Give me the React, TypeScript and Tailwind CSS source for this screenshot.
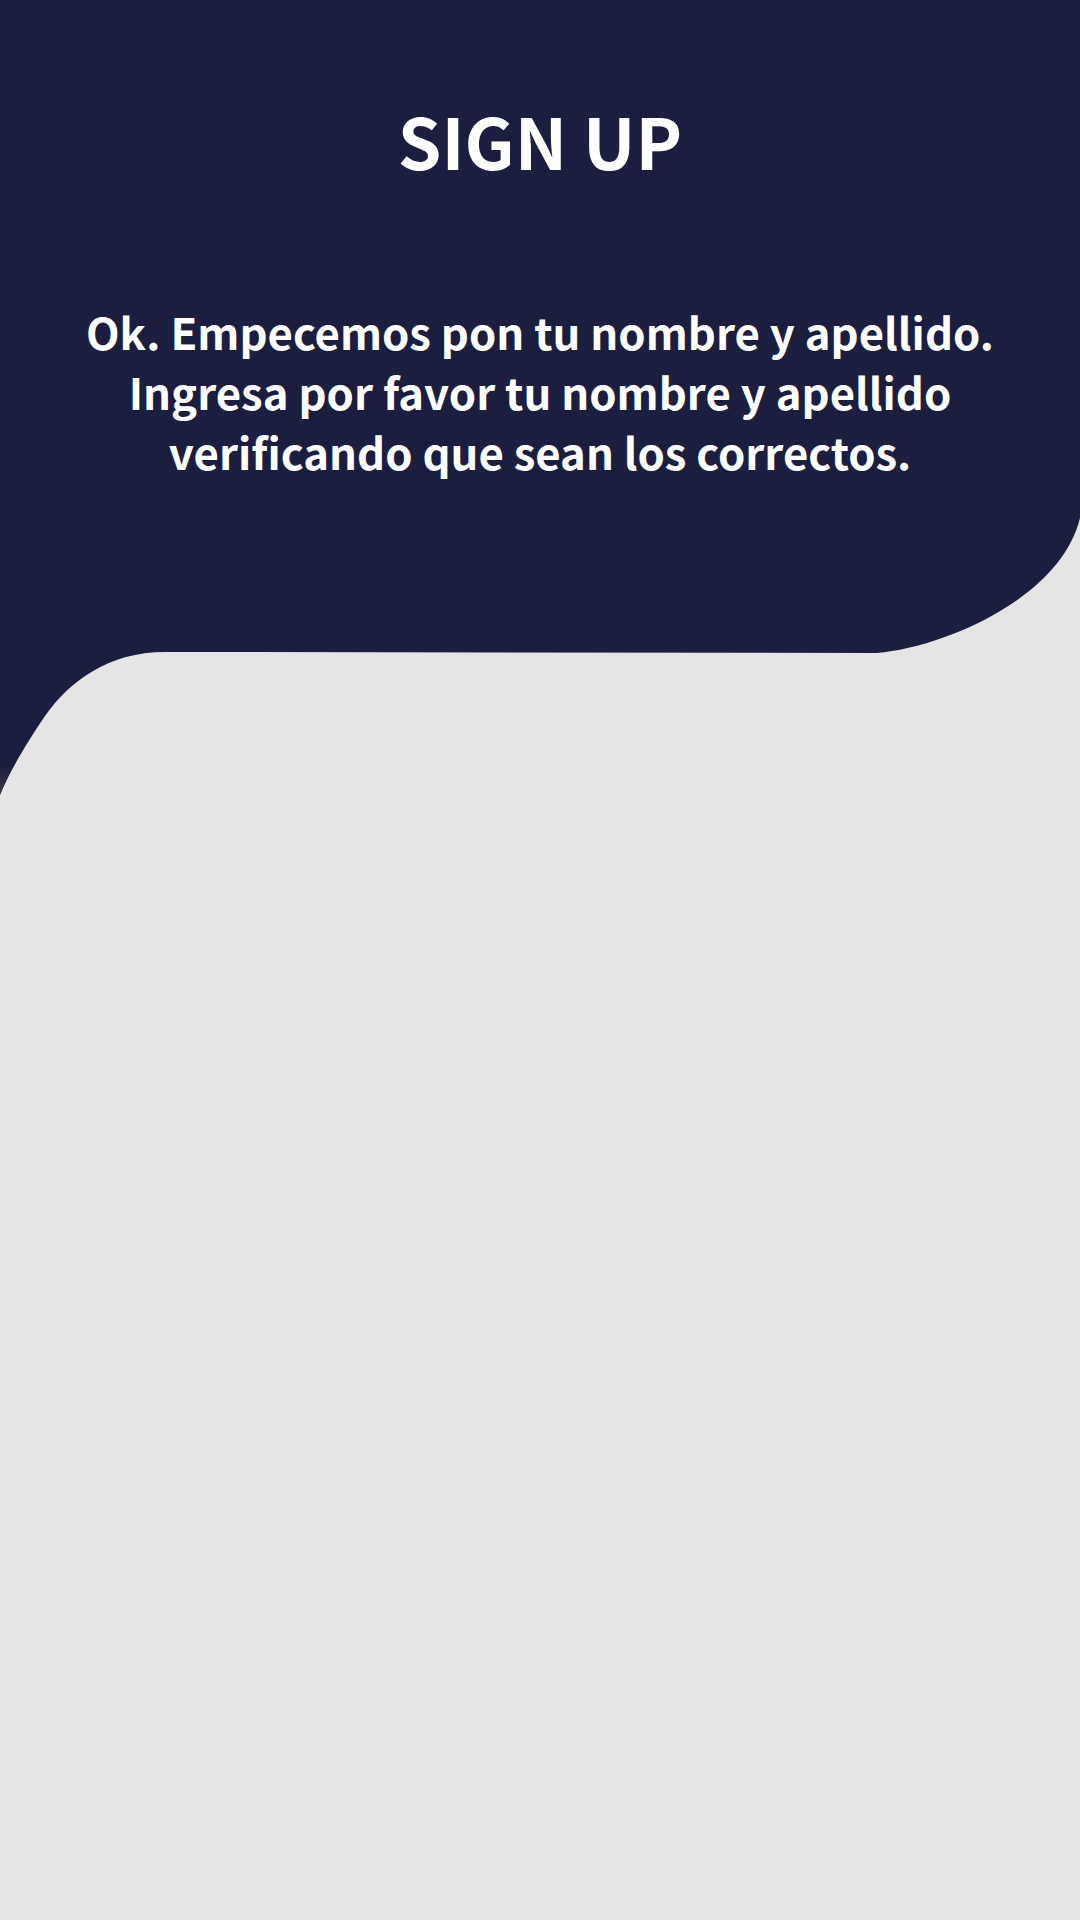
import React from 'react';

const HeaderWave: React.FC = () => (
  <svg
    className="absolute top-0 left-0 w-[1080px] h-[800px]"
    viewBox="0 0 1080 800"
    xmlns="http://www.w3.org/2000/svg"
  >
    <defs>
      <linearGradient id="edgeShade" x1="0" y1="0" x2="0" y2="1">
        <stop offset="0" stopColor="#1b1e3f" />
        <stop offset="1" stopColor="#3a3a3a" />
      </linearGradient>
    </defs>
    <path
      d="M0 0 H1080 V518 C1060 600 940 648 877 653 L170 652 C112 650 70 680 45 716 C30 738 10 770 0 795 Z"
      fill="#1b1e3f"
    />
    {/* slight shadow at the tip of the left curve */}
    <path d="M0 765 L12 768 C7 778 3 787 0 795 Z" fill="url(#edgeShade)" />
  </svg>
);

export default function App() {
  return (
    <div className="relative min-h-screen w-[1080px] h-[1920px] overflow-hidden bg-[#e5e5e5] font-['Noto_Sans_CJK_SC','Liberation_Sans',sans-serif]">
      <HeaderWave />

      <div className="relative flex flex-col items-center text-white">
        <h1 className="mt-[105px] text-[70px] leading-none font-bold">SIGN UP</h1>

        <p className="mt-[126px] text-center text-[43.7px] leading-[60px] font-bold">
          Ok. Empecemos pon tu nombre y apellido.
          <br />
          Ingresa por favor tu nombre y apellido
          <br />
          verificando que sean los correctos.
        </p>
      </div>
    </div>
  );
}
